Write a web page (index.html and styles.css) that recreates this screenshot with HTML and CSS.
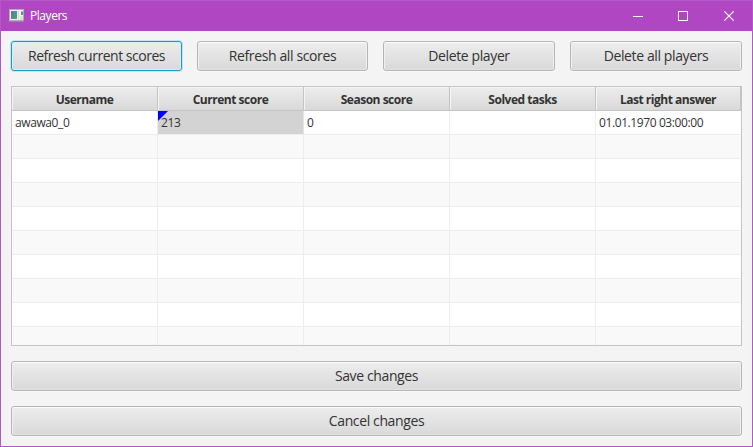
FILE: index.html
```
<!DOCTYPE html>
<html lang="en">
<head>
<meta charset="utf-8">
<title>Players</title>
<link rel="stylesheet" href="styles.css">
</head>
<body>
<div class="window">
  <header class="titlebar">
    <svg class="app-icon" width="16" height="14" viewBox="0 0 16 14">
      <defs><linearGradient id="pane" x1="0" y1="0" x2="1" y2="1"><stop offset="0" stop-color="#507baf"/><stop offset="1" stop-color="#4ea380"/></linearGradient></defs>
      <rect x=".5" y=".5" width="14" height="11.5" fill="#f2f2f2" stroke="#b5acb8"/>
      <path d="M1 12h14" stroke="#8c8791"/>
      <rect x="2" y="2" width="6" height="8" fill="url(#pane)"/>
      <path d="M9.5 2v9" stroke="#d4d4d4"/>
      <rect x="12" y="2.5" width="2" height="3.5" fill="url(#pane)"/>
      <rect x="11" y="7" width="3" height="4" fill="#dedede"/>
    </svg>
    <h1 class="title">Players</h1>
    <svg class="controls" width="102" height="11" viewBox="0 0 102 11" fill="none" stroke="#fff">
      <path d="M0 5.5h10"/>
      <rect x="45.5" y=".5" width="9" height="9"/>
      <path d="M91.3.3l9.4 9.4m0-9.4l-9.4 9.4" stroke-width="1.1"/>
    </svg>
  </header>
  <main class="content">
    <div class="toolbar">
      <button class="btn focused">Refresh current scores</button>
      <button class="btn">Refresh all scores</button>
      <button class="btn">Delete player</button>
      <button class="btn">Delete all players</button>
    </div>
    <div class="table">
      <div class="row head"><span>Username</span><span>Current score</span><span>Season score</span><span>Solved tasks</span><span>Last right answer</span></div>
      <div class="row"><span>awawa0_0</span><span class="selected">213</span><span>0</span><span></span><span>01.01.1970 03:00:00</span></div>
      <div class="row"><span></span><span></span><span></span><span></span><span></span></div>
      <div class="row"><span></span><span></span><span></span><span></span><span></span></div>
      <div class="row"><span></span><span></span><span></span><span></span><span></span></div>
      <div class="row"><span></span><span></span><span></span><span></span><span></span></div>
      <div class="row"><span></span><span></span><span></span><span></span><span></span></div>
      <div class="row"><span></span><span></span><span></span><span></span><span></span></div>
      <div class="row"><span></span><span></span><span></span><span></span><span></span></div>
      <div class="row"><span></span><span></span><span></span><span></span><span></span></div>
      <div class="row"><span></span><span></span><span></span><span></span><span></span></div>
    </div>
    <button class="btn">Save changes</button>
    <button class="btn">Cancel changes</button>
  </main>
</div>
</body>
</html>
```
FILE: styles.css
```
* { box-sizing: border-box; }
body {
  margin: 0;
  font-family: "Open Sans", "Noto Sans", sans-serif;
  color: #333;
}
.window {
  width: 753px;
  height: 447px;
  border: 1px solid #b457c7;
  background: #f4f4f4;
  overflow: hidden;
}
.titlebar {
  display: flex;
  align-items: center;
  height: 30px;
  padding: 0 17px 0 8px;
  background: #b146c2;
  color: #fff;
}
.title {
  flex: 1;
  margin: 0 0 0 5px;
  font-size: 12px;
  line-height: 16px;
  font-weight: 400;
  letter-spacing: -.45px;
}
.content {
  display: flex;
  flex-direction: column;
  gap: 15px;
  padding: 10px;
}
.toolbar {
  display: grid;
  grid-template-columns: 171px 171px 172px 172px;
  gap: 15px;
}
.btn {
  height: 30px;
  padding: 0;
  border: 1px solid #b5b5b5;
  border-radius: 3px;
  background: linear-gradient(#ededed, #d9d9d9);
  box-shadow: inset 0 1px #fcfcfc, inset 1px 0 #f0f0f0, inset -1px 0 #f0f0f0, inset 0 -1px #e2e2e2, 0 1px #fafafa;
  font: 14px/28px "Open Sans", "Noto Sans", sans-serif;
  letter-spacing: -.38px;
  color: #333;
}
.btn.focused {
  border-color: #159dcb;
  box-shadow: inset 0 0 0 1px #dceef4, 0 0 0 1px #c5e6f1;
  letter-spacing: -.48px;
}
.table {
  height: 260px;
  border: 1px solid #c4c4c4;
  overflow: hidden;
  font-size: 12px;
}
.row {
  display: grid;
  grid-template-columns: repeat(4, 146px) 145px;
  grid-template-rows: 24px;
  height: 24px;
  background: #fff;
}
.row:nth-child(odd) { background: #f9f9f9; }
.row > span {
  position: relative;
  padding-left: 3px;
  border: solid #ededed;
  border-width: 0 1px 1px 0;
  line-height: 24px;
  letter-spacing: -.4px;
  white-space: nowrap;
}
.row > span:last-child { border-right-color: transparent; }
.row.head > span {
  padding: 0;
  border-color: #c4c4c4;
  background: linear-gradient(#ededed, #d9d9d9);
  box-shadow: inset 1px 1px #f5f5f5;
  font-weight: 700;
  line-height: 26px;
  letter-spacing: -.48px;
  text-align: center;
}
.row > .selected {
  background: #d3d3d3;
  border-right-color: #e4e4e4;
}
.selected::before {
  content: "";
  position: absolute;
  left: 0;
  top: 0;
  width: 10px;
  height: 10px;
  background: #00f;
  clip-path: polygon(0 0, 100% 0, 0 100%);
}
```
